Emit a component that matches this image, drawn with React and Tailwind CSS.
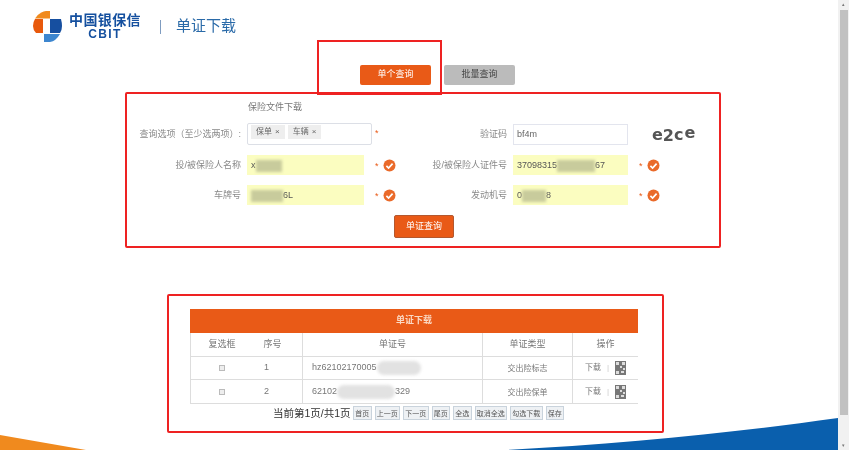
const orange = 'bg-[#e95a17]';

function Check() {
  return (
    <svg width="13" height="13" viewBox="0 0 13 13" className="shrink-0">
      <circle cx="6.5" cy="6.5" r="6" fill="#ea6a2a" />
      <path d="M3.4 6.8 L5.6 9 L9.6 4.6" fill="none" stroke="#fff" strokeWidth="1.7" />
    </svg>
  );
}

function Tag({ children }) {
  return (
    <span className="flex h-[14px] items-center gap-[3px] bg-[#eeeeee] px-[5px] text-[8px] leading-none text-[#666]">
      {children}
      <span>×</span>
    </span>
  );
}

function Field({ label, value, blur, after, labelWidth, inputWidth }) {
  return (
    <div className="flex h-[20px] items-center">
      <div className="shrink-0 pr-[6px] pt-[2px] text-right text-[9px] text-[#888]" style={{ width: labelWidth }}>
        {label}
      </div>
      <div
        className="flex h-[20px] shrink-0 items-center overflow-hidden bg-[#fbfdc0] px-[4px] pt-[1px] text-[9px] text-[#555]"
        style={{ width: inputWidth }}
      >
        <span>{value}</span>
        <span className="h-[12px] bg-[#c8cb9c] blur-[1.5px]" style={{ width: blur }} />
        <span>{after}</span>
      </div>
      <span className="ml-[11px] w-[8px] shrink-0 translate-y-[2px] text-[9px] text-[#e95a17]">*</span>
      <Check />
    </div>
  );
}

function Pager({ children }) {
  return (
    <span className="flex h-[14px] items-center whitespace-nowrap border border-[#c9d3dc] bg-[#eef1f4] px-[1.25px] text-[7px] leading-none text-[#555]">
      {children}
    </span>
  );
}

function QrMark() {
  return (
    <svg width="11" height="14" viewBox="0 0 11 14">
      <rect width="11" height="14" fill="#777" />
      <path d="M1 1h3v3H1zM7 1h3v3H7zM1 10h3v3H1zM5 5h2v2H5zM8 7h2v2H8zM6 10h3v2H6z" fill="#ddd" />
    </svg>
  );
}

function Row({ no, value, blurWidth, after, type, height }) {
  return (
    <div className={`flex ${height} items-center border-b border-l border-[#dddddd] text-[8px] text-[#777]`}>
      <div className="flex w-[62px] justify-center">
        <span className="h-[6px] w-[6px] border border-[#bbb] bg-[#eee]" />
      </div>
      <div className="w-[49px] pr-[22px] text-center text-[9px]">{no}</div>
      <div className="flex h-full w-[180px] items-center border-l border-[#dddddd] pl-[9px] text-[9px]">
        {value}
        <span className="h-[14px] rounded-full bg-[#e2e2e2] blur-[1.5px]" style={{ width: blurWidth }} />
        {after}
      </div>
      <div className="flex h-full w-[90px] items-center justify-center border-l border-[#dddddd] pt-[2px]">{type}</div>
      <div className="flex h-full flex-1 items-center justify-center gap-[6px] border-l border-[#dddddd]">
        <span>下载</span>
        <span className="text-[#ccc]">|</span>
        <QrMark />
      </div>
    </div>
  );
}

export default function App() {
  return (
    <div className="relative h-[450px] w-[849px] overflow-hidden bg-white font-['Liberation_Sans','Noto_Sans_CJK_SC',sans-serif] blur-[0.35px]">
      {/* bottom wave */}
      <svg className="absolute bottom-0 left-0" width="838" height="40" viewBox="0 0 838 40">
        <path d="M0 25 L86 40 L0 40 Z" fill="#f08a1e" />
        <path d="M505 40 C620 34 740 22 838 8 L838 40 Z" fill="#0a5fad" />
      </svg>

      <div className="relative flex h-[450px] w-[838px] flex-col">
        {/* header */}
        <div className="flex h-[47px] items-center pl-[33px] pt-[6px]">
          <svg width="30" height="32" viewBox="0 0 30 32">
            <path d="M2 7.5 A15 15 0 0 1 17 0 V7.5 Z" fill="#f08a1e" />
            <path d="M0 15 Q0 11 2 8 H10 V22 H3 Q0 19 0 15 Z" fill="#e8590c" />
            <path d="M17 8 H28 Q29 12 29 15 Q29 19 27 22 H17 Z" fill="#164fa0" />
            <path d="M11 23 H27 Q23 30 17 31 L11 31 Z" fill="#3d86cf" />
          </svg>
          <div className="ml-[5px] flex w-[74px] flex-col items-center font-bold leading-none text-[#15509f]">
            <span className="text-[14px] tracking-[0.4px]">中国银保信</span>
            <span className="mt-[1px] text-[12px] tracking-[1.4px]">CBIT</span>
          </div>
          <span className="ml-[18px] h-[14px] w-[1px] bg-[#7f9cc0]" />
          <span className="ml-[15px] text-[15px] text-[#2a6aa8]">单证下载</span>
        </div>

        {/* tabs */}
        <div className="mt-[18px] flex gap-[13px] pl-[360px]">
          <button className={`h-[20px] w-[71px] rounded-[2px] ${orange} text-[9px] text-white`}>单个查询</button>
          <button className="h-[20px] w-[71px] rounded-[2px] bg-[#bbbbbb] text-[9px] text-[#444]">批量查询</button>
        </div>

        {/* query form */}
        <div className="mt-[16px] flex flex-col items-stretch">
          <div className="ml-[248px] text-[9px] leading-[12px] text-[#777]">保险文件下载</div>
          <div className="mt-[10px] flex items-start">
            <div className="flex w-[395px] shrink-0 flex-col gap-[10px]">
              <div className="flex h-[22px] items-center">
                <div className="w-[247px] pr-[6px] pt-[2px] text-right text-[9px] text-[#888]">查询选项（至少选两项）:</div>
                <div className="flex h-[22px] w-[125px] items-start gap-[3px] rounded-[2px] border border-[#dcdfe6] p-[1px] pl-[3px]">
                  <Tag>保单</Tag>
                  <Tag>车辆</Tag>
                </div>
                <span className="ml-[3px] text-[9px] text-[#e95a17]">*</span>
              </div>
              <Field label="投/被保险人名称" value="x" blur={26} labelWidth={247} inputWidth={117} />
              <Field label="车牌号" value="" blur={32} after="6L" labelWidth={247} inputWidth={117} />
            </div>
            <div className="flex flex-col gap-[10px]">
              <div className="flex h-[22px] items-center">
                <div className="w-[118px] pr-[6px] pt-[2px] text-right text-[9px] text-[#888]">验证码</div>
                <div className="flex h-[21px] w-[115px] items-center border border-[#e3e5ee] px-[3px] pt-[1px] text-[9px] text-[#666]">bf4m</div>
                <span className="ml-[24px] flex items-center font-['DejaVu_Sans',sans-serif] text-[16px] font-bold leading-none text-[#555]">
                  <span className="translate-y-[1px]">e</span>
                  <span className="translate-y-[2px]">2</span>
                  <span className="translate-y-[1px]">c</span>
                  <span className="ml-[1px] -translate-y-[1px]">e</span>
                </span>
              </div>
              <Field label="投/被保险人证件号" value="37098315" blur={38} after="67" labelWidth={118} inputWidth={115} />
              <Field label="发动机号" value="0" blur={24} after="8" labelWidth={118} inputWidth={115} />
            </div>
          </div>
          <button className={`mx-auto mt-[10px] h-[23px] w-[60px] translate-x-[5px] rounded-[2px] border border-[#b4582f] ${orange} text-[9px] text-white`}>
            单证查询
          </button>
        </div>

        {/* result table */}
        <div className="ml-[190px] mt-[71px] w-[448px]">
          <div className={`flex h-[24px] items-center justify-center ${orange} text-[9px] font-bold text-[#fbd9c4]`}>单证下载</div>
          <div className="flex h-[24px] items-center border-b border-l border-[#dddddd] text-[9px] text-[#777]">
            <div className="w-[62px] text-center">复选框</div>
            <div className="w-[49px] pr-[10px] text-center">序号</div>
            <div className="flex h-full w-[180px] items-center justify-center border-l border-[#dddddd]">单证号</div>
            <div className="flex h-full w-[90px] items-center justify-center border-l border-[#dddddd]">单证类型</div>
            <div className="flex h-full flex-1 items-center justify-center border-l border-[#dddddd]">操作</div>
          </div>
          <Row no="1" value="hz62102170005" blurWidth={44} type="交出险标志" height="h-[23px]" />
          <Row no="2" value="62102" blurWidth={58} after="329" type="交出险保单" height="h-[24px]" />
          <div className="mt-[2px] flex items-center gap-[3px] pl-[83px] leading-none text-[#333]">
            <span className="-mr-[3px] w-[80px] shrink-0 whitespace-nowrap text-[10.5px]">当前第1页/共1页</span>
            <Pager>首页</Pager>
            <Pager>上一页</Pager>
            <Pager>下一页</Pager>
            <Pager>尾页</Pager>
            <Pager>全选</Pager>
            <Pager>取消全选</Pager>
            <Pager>勾选下载</Pager>
            <Pager>保存</Pager>
          </div>
        </div>
      </div>

      {/* scrollbar */}
      <div className="absolute right-0 top-0 flex h-[450px] w-[11px] flex-col items-center justify-between bg-[#f1f1f1] py-[2px] text-[5px] leading-none text-[#777]">
        <span>▴</span>
        <span>▾</span>
      </div>
      <div className="absolute right-[1px] top-[10px] h-[405px] w-[8px] bg-[#c1c1c1]" />

      {/* red annotation boxes */}
      <div className="absolute left-[317px] top-[40px] h-[55px] w-[125px] border-2 border-[#ee2222]" />
      <div className="absolute left-[125px] top-[92px] h-[156px] w-[596px] rounded-[2px] border-2 border-[#ee2222]" />
      <div className="absolute left-[167px] top-[294px] h-[139px] w-[497px] rounded-[2px] border-2 border-[#ee2222]" />
    </div>
  );
}
